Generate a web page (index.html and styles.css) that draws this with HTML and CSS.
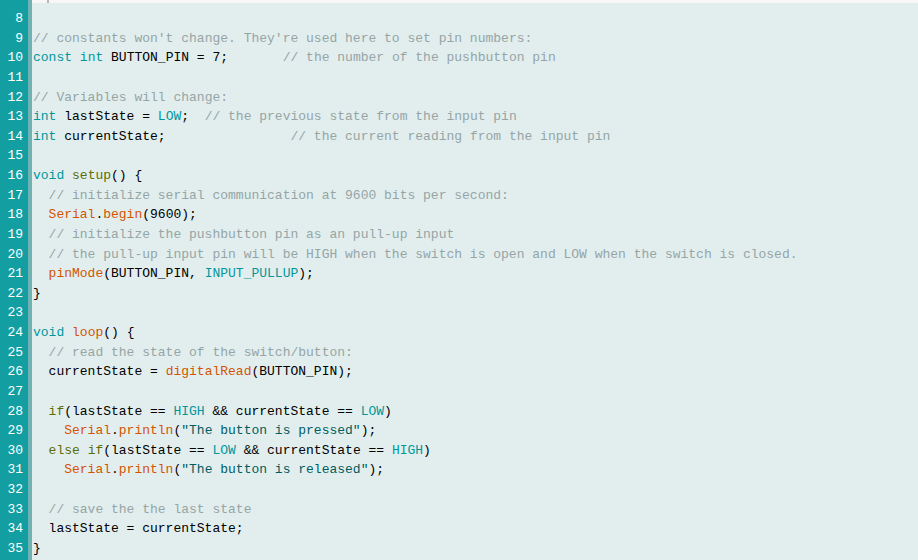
FILE: index.html
```html
<!DOCTYPE html>
<html>
<head>
<meta charset="utf-8">
<link rel="stylesheet" href="styles.css">
</head>
<body>
<div class="editor">
  <div class="gutter">
    <div class="n">8</div><div class="n">9</div><div class="n">10</div><div class="n">11</div>
    <div class="n">12</div><div class="n">13</div><div class="n">14</div><div class="n">15</div>
    <div class="n">16</div><div class="n">17</div><div class="n">18</div><div class="n">19</div>
    <div class="n">20</div><div class="n">21</div><div class="n">22</div><div class="n">23</div>
    <div class="n">24</div><div class="n">25</div><div class="n">26</div><div class="n">27</div>
    <div class="n">28</div><div class="n">29</div><div class="n">30</div><div class="n">31</div>
    <div class="n">32</div><div class="n">33</div><div class="n">34</div><div class="n">35</div>
  </div>
  <div class="stripe"></div>
  <div class="code">
    <span class="tick"></span>
    <div class="l"></div>
    <div class="l"><span class="c">// constants won't change. They're used here to set pin numbers:</span></div>
    <div class="l"><span class="k">const</span> <span class="k">int</span> BUTTON_PIN = 7;       <span class="c">// the number of the pushbutton pin</span></div>
    <div class="l"></div>
    <div class="l"><span class="c">// Variables will change:</span></div>
    <div class="l"><span class="k">int</span> lastState = <span class="k">LOW</span>;  <span class="c">// the previous state from the input pin</span></div>
    <div class="l"><span class="k">int</span> currentState;                <span class="c">// the current reading from the input pin</span></div>
    <div class="l"></div>
    <div class="l"><span class="k">void</span> <span class="f">setup</span>() {</div>
    <div class="l i1"><span class="c">// initialize serial communication at 9600 bits per second:</span></div>
    <div class="l i1"><span class="o">Serial</span>.<span class="o">begin</span>(9600);</div>
    <div class="l i1"><span class="c">// initialize the pushbutton pin as an pull-up input</span></div>
    <div class="l i1"><span class="c">// the pull-up input pin will be HIGH when the switch is open and LOW when the switch is closed.</span></div>
    <div class="l i1"><span class="o">pinMode</span>(BUTTON_PIN, <span class="k">INPUT_PULLUP</span>);</div>
    <div class="l">}</div>
    <div class="l"></div>
    <div class="l"><span class="k">void</span> <span class="o">loop</span>() {</div>
    <div class="l i1"><span class="c">// read the state of the switch/button:</span></div>
    <div class="l i1">currentState = <span class="o">digitalRead</span>(BUTTON_PIN);</div>
    <div class="l"></div>
    <div class="l i1"><span class="f">if</span>(lastState == <span class="k">HIGH</span> &amp;&amp; currentState == <span class="k">LOW</span>)</div>
    <div class="l i2"><span class="o">Serial</span>.<span class="o">println</span>(<span class="s">"The button is pressed"</span>);</div>
    <div class="l i1"><span class="f">else</span> <span class="f">if</span>(lastState == <span class="k">LOW</span> &amp;&amp; currentState == <span class="k">HIGH</span>)</div>
    <div class="l i2"><span class="o">Serial</span>.<span class="o">println</span>(<span class="s">"The button is released"</span>);</div>
    <div class="l"></div>
    <div class="l i1"><span class="c">// save the the last state</span></div>
    <div class="l i1">lastState = currentState;</div>
    <div class="l">}</div>
  </div>
</div>
</body>
</html>
```
FILE: styles.css
```css
html, body {
  margin: 0;
  padding: 0;
  height: 100%;
  background: #e2eeee;
}
.editor {
  display: flex;
  height: 560px;
  overflow: hidden;
  font-family: "Liberation Mono", "Courier New", monospace;
  font-size: 13px;
  line-height: 19.63px;
}
.gutter {
  width: 28px;
  flex: none;
  background: #139fa2;
  padding-top: 9px;
  box-sizing: border-box;
}
.n {
  height: 19.63px;
  padding-right: 5px;
  text-align: right;
  color: #ffffff;
}
.stripe {
  width: 4px;
  flex: none;
  background: #6fb3b5;
}
.code {
  flex: 1;
  position: relative;
  border-top: 3px solid #f7f7f7;
  padding: 6px 0 0 1px;
  color: #000000;
}
.l {
  height: 19.63px;
  white-space: pre;
}
.i1 { padding-left: 15.6px; }
.i2 { padding-left: 31.2px; }
.tick {
  position: absolute;
  left: 15px;
  top: -3px;
  width: 2px;
  height: 3px;
  background: #b8b8b8;
}
.c { color: #95a5a6; }
.k { color: #00979c; }
.f { color: #5e6d03; }
.o { color: #d35400; }
.s { color: #005c5f; }
```
